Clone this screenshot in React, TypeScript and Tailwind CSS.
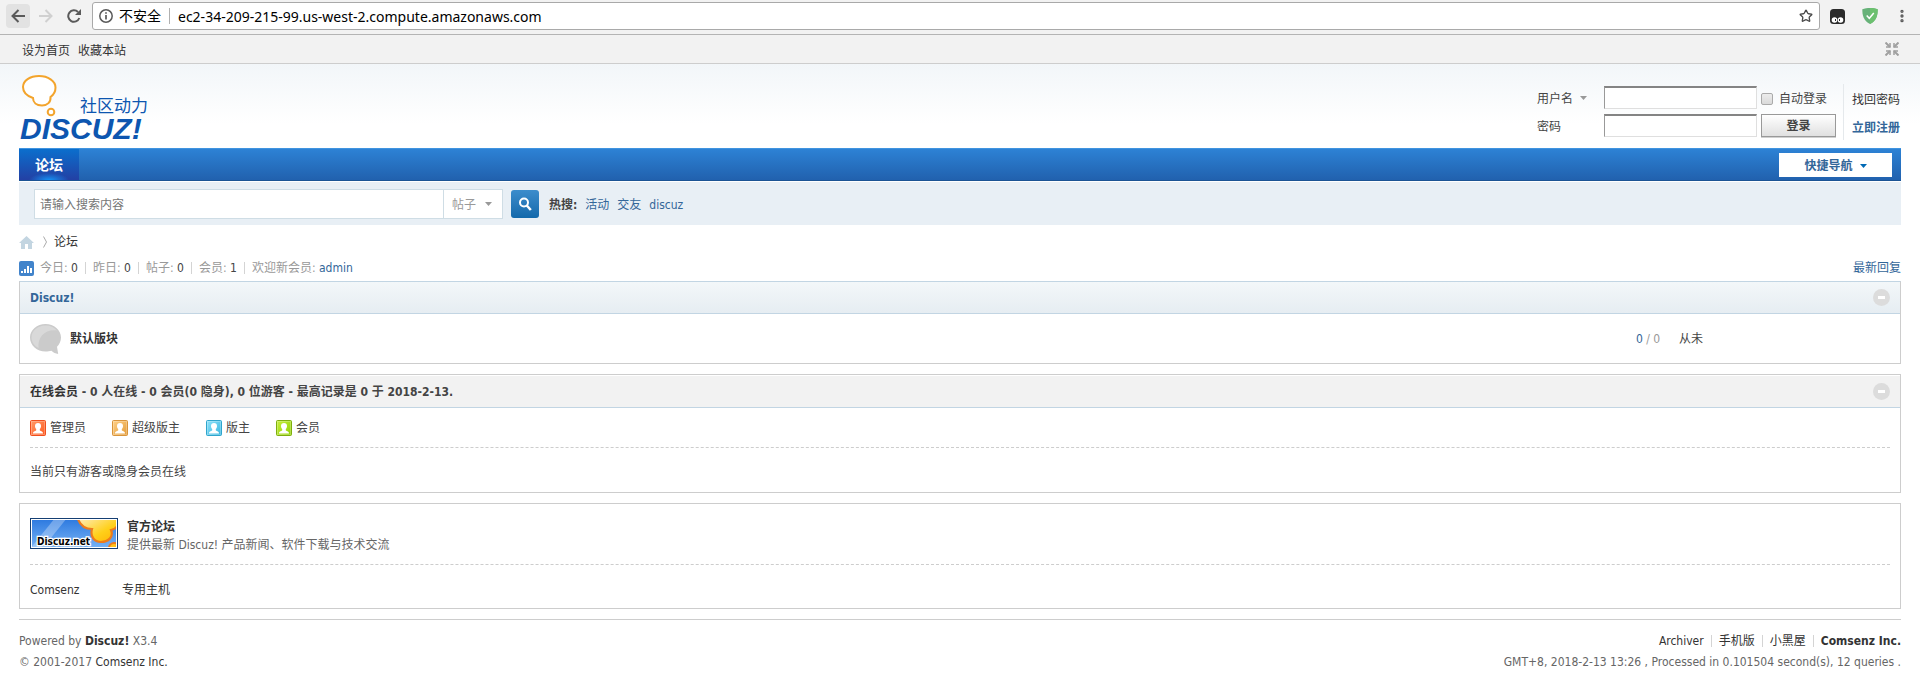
import type { ReactNode } from 'react';
import { MoreVertical, Star } from 'lucide-react';

const hotWords = ['活动', '交友', 'discuz'];

const stats = [
  { label: '今日', value: 0 },
  { label: '昨日', value: 0 },
  { label: '帖子', value: 0 },
  { label: '会员', value: 1 },
];

const groups = [
  { name: '管理员', edge: '#f04e1d', from: '#ff9a68', to: '#ff5a1f' },
  { name: '超级版主', edge: '#d9943a', from: '#ffd28a', to: '#e39a35' },
  { name: '版主', edge: '#2fa5cc', from: '#8fe3fb', to: '#35b4de' },
  { name: '会员', edge: '#7fae0e', from: '#c8f03c', to: '#8fd000' },
];

const Caret = ({ className = '' }: { className?: string }) => (
  <svg viewBox="0 0 7 4" className={`h-1 w-[7px] fill-current ${className}`} aria-hidden="true">
    <path d="M0 0h7L3.5 4z" />
  </svg>
);

const Pipe = () => <span className="mx-[7px] inline-block h-3 w-px bg-[#d4d4d4] align-[-2px]" />;

const ToggleIcon = ({ label }: { label: string }) => (
  <button type="button" aria-label={label} className="flex size-[17px] items-center justify-center rounded-full bg-[#dcdcdc]">
    <span className="h-[3px] w-[7px] bg-white" />
  </button>
);

const Panel = ({ children, className = '' }: { children: ReactNode; className?: string }) => (
  <section className={`border border-[#cdcdcd] bg-white ${className}`}>{children}</section>
);

const UserIcon = ({ id, edge, from, to }: { id: string; edge: string; from: string; to: string }) => (
  <svg viewBox="0 0 16 16" className="size-4" aria-hidden="true">
    <defs>
      <linearGradient id={id} x1="0" y1="0" x2="1" y2="1">
        <stop offset="0" stopColor={from} />
        <stop offset="1" stopColor={to} />
      </linearGradient>
    </defs>
    <rect x="0.5" y="0.5" width="15" height="15" rx="1" fill={`url(#${id})`} stroke={edge} />
    <rect x="1.5" y="1.5" width="13" height="13" fill="none" stroke="#fff" strokeOpacity="0.25" />
    <path d="M8 3c2 0 3 1.200 3 3 0 1.300-.5 2.300-1.200 3v1.200c0 .8 3.200.8 3.200 2.800v.500H3V13c0-2 3.200-2 3.200-2.800V9C5.500 8.300 5 7.300 5 6c0-1.800 1-3 3-3z" fill="#fff" />
  </svg>
);

const BrowserBar = () => (
  <div className="flex h-[35px] items-start border-b border-[#b4b4b4] bg-[#f2f2f2] pl-[6px] pr-[10px] font-['Noto_Sans','Noto_Sans_CJK_SC',sans-serif] text-[14px] text-black">
    <button type="button" aria-label="后退" className="mt-1 flex size-6 items-center justify-center rounded-sm bg-[#e2e2e2]">
      <svg viewBox="0 0 14 14" className="size-[14px]" fill="none" stroke="#5a5a5a" strokeWidth="2">
        <path d="M14 7H1.500M7.500 1 1.500 7l6 6" />
      </svg>
    </button>
    <button type="button" aria-label="前进" className="ml-1 mt-1 flex size-6 items-center justify-center">
      <svg viewBox="0 0 14 14" className="size-[14px]" fill="none" stroke="#d0d0d0" strokeWidth="2">
        <path d="M0 7h12.500M6.500 1l6 6-6 6" />
      </svg>
    </button>
    <button type="button" aria-label="刷新" className="ml-1 mt-1 flex size-6 items-center justify-center">
      <svg viewBox="0 0 14 14" className="size-[14px]" fill="none" stroke="#5a5a5a" strokeWidth="2">
        <path d="M12.300 9A5.700 5.700 0 1 1 11 3" />
        <path d="M14 0v6H8z" fill="#5a5a5a" stroke="none" />
      </svg>
    </button>
    <div className="ml-[6px] mt-[2px] flex h-7 flex-1 items-center rounded-[3px] border border-[#a9a9a9] bg-white pl-[6px] pr-[6px]">
      <svg viewBox="0 0 14 14" className="size-[14px]" fill="none" stroke="#5a5a5a">
        <circle cx="7" cy="7" r="6.200" strokeWidth="1.500" />
        <path d="M7 6v4.500M7 3.300v1.500" strokeWidth="1.700" />
      </svg>
      <span className="ml-[6px] whitespace-nowrap">不安全</span>
      <span className="ml-2 h-4 w-px bg-[#b0b0b0]" />
      <input
        aria-label="地址"
        className="ml-2 h-6 flex-1 bg-transparent outline-none"
        defaultValue="ec2-34-209-215-99.us-west-2.compute.amazonaws.com"
      />
      <button type="button" aria-label="收藏">
        <Star className="size-[14px] text-[#4a4a4a]" strokeWidth={2.3} />
      </button>
    </div>
    <svg viewBox="0 0 15 15" className="ml-[10px] mt-[9px] size-[15px]" aria-hidden="true">
      <rect width="15" height="15" rx="3.500" fill="#2b2b2b" />
      <circle cx="4.500" cy="11" r="2.800" fill="#fff" />
      <circle cx="10.500" cy="11" r="2.800" fill="#fff" />
      <path d="M5 10h1v2H5zM9 10h1v2H9z" fill="#2b2b2b" />
    </svg>
    <svg viewBox="0 0 16 16" className="ml-[17px] mt-2 size-4" aria-hidden="true">
      <path d="M8 0c2.500 0 5.500.5 7.700 1.300 0 6-1.200 11.500-7.700 14.700C1.500 12.800.3 7.300.3 1.300 2.500.5 5.500 0 8 0z" fill="#67b279" />
      <path d="M8 0c2.500 0 5.500.5 7.700 1.300 0 6-1.200 11.500-7.700 14.700z" fill="#6cc06f" />
      <path d="m4.700 7.600 2.600 2.700 4.500-5.200" fill="none" stroke="#fff" strokeWidth="1.500" />
    </svg>
    <button type="button" aria-label="菜单" className="ml-4 mt-2">
      <MoreVertical className="size-4 text-[#5a5a5a]" strokeWidth={3} />
    </button>
  </div>
);

const TopLinks = () => (
  <div className="flex h-[29px] items-center justify-between border-b border-[#cdcdcd] bg-[#f2f2f2] pl-[22px] pr-[21px] text-[#333]">
    <div className="flex gap-2 pt-[3px]">
      <a href="#home">设为首页</a>
      <a href="#fav">收藏本站</a>
    </div>
    <button type="button" aria-label="切换到窄版" className="pb-px">
      <svg viewBox="0 0 14 14" className="block size-[14px]" fill="none" stroke="#a0a0a0" strokeWidth="2">
        <path d="M.5.5 5 5M13.500.5 9 5M.5 13.500 5 9M13.500 13.500 9 9" />
        <path d="M5 1v4H1M9 1v4h4M5 13V9H1M9 13V9h4" strokeWidth="1.500" />
      </svg>
    </button>
  </div>
);

const Logo = () => (
  <a href="#index" aria-label="Discuz!">
    <svg viewBox="0 0 132 74" className="h-[74px] w-[132px]">
      <path
        d="M14 24C6.500 21.500 4 17 4 13 4 6.500 11 2 20 2s16.500 5 16.500 11.500c0 4-2 7.500-5 9.500.5 5-3 8.500-8.500 8.500s-9-3-9-7.500z"
        fill="#fff"
        stroke="#f3a42c"
        strokeWidth="2"
      />
      <circle cx="32" cy="38" r="3.300" fill="#fff" stroke="#f3a42c" strokeWidth="2" />
      <text x="61" y="38" fontSize="17" fill="#0d56b0" fontFamily="Noto Sans CJK SC, sans-serif">社区动力</text>
      <text x="1" y="65" fontSize="30" fontWeight="700" fontStyle="italic" fill="#0d56b0" fontFamily="Liberation Sans, sans-serif">DISCUZ!</text>
    </svg>
  </a>
);

const inputStyle = 'h-[23px] w-[153px] border border-[#dfdfdf] border-l-[#999] border-t-2 border-t-[#848484] bg-white px-1 outline-none';

const LoginForm = () => (
  <form className="flex h-14 pr-px text-[#444]">
    <div className="flex flex-col gap-[5px] pt-[2px]">
      <div className="flex items-center">
        <div className="flex w-[67px] items-center">
          <select aria-label="登录方式" className="w-[43px] appearance-none bg-transparent pt-[2px] outline-none">
            <option>用户名</option>
            <option>Email</option>
          </select>
          <Caret className="text-[#999]" />
        </div>
        <input aria-label="用户名" className={inputStyle} />
        <label className="ml-1 flex w-[75px] items-center gap-[6px] pt-[2px]">
          <input type="checkbox" className="size-3 appearance-none rounded-[2px] border border-[#aaa] bg-linear-to-b from-[#ececec] to-[#dadada]" />
          自动登录
        </label>
      </div>
      <div className="flex items-center">
        <label htmlFor="password" className="w-[67px] pt-[2px]">密码</label>
        <input id="password" type="password" className={inputStyle} />
        <button type="button" className="ml-1 h-[23px] w-[75px] border border-[#999] bg-linear-to-b from-white to-[#e0e0e0] font-bold shadow-[0_1px_0_#d0d0d0]">
          登录
        </button>
      </div>
    </div>
    <div className="ml-[7px] flex flex-col gap-[10px] border-l border-[#e5e9ec] pl-2 pt-[7px]">
      <a href="#lost" className="text-[#333]">找回密码</a>
      <a href="#register" className="font-bold text-[#369]">立即注册</a>
    </div>
  </form>
);

const NavBar = () => (
  <nav className="flex h-[33px] items-stretch justify-between border-b border-[#1b5494] border-t border-t-[#3f94e0] bg-linear-to-b from-[#2d82d5] to-[#2161ae]">
    <a
      href="#forum"
      className="flex w-[60px] items-center justify-center bg-[radial-gradient(ellipse_20px_7px_at_50%_100%,#1492f5,transparent),linear-gradient(#0b6fcd,#2340a4)] text-[14px] font-bold text-white"
    >
      论坛
    </a>
    <button type="button" className="mr-[9px] mt-1 flex h-6 w-[113px] items-center justify-center gap-[7px] bg-white pt-px font-bold text-[#369]">
      快捷导航
      <Caret className="text-[#0069b5]" />
    </button>
  </nav>
);

const SearchBar = () => (
  <form className="mt-px flex h-[43px] items-center bg-[#e8eff5] pl-[15px]">
    <div className="flex h-[30px] items-center border border-[#cfdde5] bg-white">
      <input aria-label="搜索" placeholder="请输入搜索内容" className="h-7 w-[408px] px-[5px] pt-[2px] outline-none placeholder:text-[#757575]" />
      <div className="flex h-7 w-[59px] items-center border-l border-[#cfdde5] pl-2 text-[#999]">
        <select aria-label="搜索类型" className="w-[33px] appearance-none bg-transparent pt-[2px] outline-none">
          <option>帖子</option>
          <option>用户</option>
        </select>
        <Caret />
      </div>
    </div>
    <button type="button" aria-label="搜索" className="ml-2 flex size-7 items-center justify-center rounded-[3px] bg-linear-to-b from-[#3c8dcc] to-[#1269ab]">
      <svg viewBox="0 0 14 14" className="size-[14px]" fill="none" stroke="#fff" strokeWidth="2">
        <circle cx="6" cy="5.500" r="4" />
        <path d="m8.800 8.500 4 4.500" strokeWidth="2.500" />
      </svg>
    </button>
    <div className="ml-[10px] flex gap-2 pt-[2px]">
      <strong className="text-[#444]">热搜:</strong>
      {hotWords.map(word => (
        <a key={word} href="#search" className="text-[#369]">{word}</a>
      ))}
    </div>
  </form>
);

const Breadcrumb = () => (
  <div className="flex h-[34px] items-center text-[#333]">
    <a href="#index" aria-label="首页">
      <svg viewBox="0 0 15 13" className="h-[13px] w-[15px] fill-[#c3d5e1]">
        <path d="M7.500 0 15 7h-2v6H9V8H6v5H2V7H0z" />
      </svg>
    </a>
    <svg viewBox="0 0 4 12" className="ml-[9px] mr-[7px] h-3 w-1" fill="none" stroke="#aaa">
      <path d="M.5.5 3.500 6l-3 5.500" />
    </svg>
    <a href="#forum">论坛</a>
  </div>
);

const StatsLine = () => (
  <div className="mb-1 flex h-[18px] items-center justify-between text-[#999]">
    <div className="flex items-center">
      <svg viewBox="0 0 15 15" className="mr-[6px] size-[15px]" aria-hidden="true">
        <rect width="15" height="15" rx="2" fill="#4284cb" />
        <path d="M2 10h2v2H2zM5 8h2v4H5zM8 5h2v7H8zM11 7h2v5h-2z" fill="#fff" />
      </svg>
      <p>
        {stats.map(stat => (
          <span key={stat.label}>
            {stat.label}: <em className="not-italic text-[#444]">{stat.value}</em>
            <Pipe />
          </span>
        ))}
        欢迎新会员: <a href="#admin" className="text-[#369]">admin</a>
      </p>
    </div>
    <a href="#new" className="text-[#369]">最新回复</a>
  </div>
);

const ForumPanel = () => (
  <Panel className="border-t-[#c2d5e3]">
    <header className="flex h-8 items-center justify-between border-b border-[#c2d5e3] bg-linear-to-b from-[#f3f7f9] to-[#e6edf2] px-[10px]">
      <h2 className="font-bold text-[#369]"><a href="#discuz">Discuz!</a></h2>
      <ToggleIcon label="收起版块" />
    </header>
    <table className="w-full">
      <tbody>
        <tr className="h-[49px]">
          <td className="w-[50px] pl-[10px]">
            <svg viewBox="0 0 32 32" className="size-8" aria-hidden="true">
              <path d="M15.500 1C24 1 31 7 31 14.500c0 4-1.800 7-4 9.300l1.200 7.200c-2.500-.3-5-1.500-6.700-3.200-2 .5-3.700.7-6 .7C7 28.500 0 22.500 0 14.500 0 7 7 1 15.500 1z" fill="#cbcbcb" />
              <path d="M15.500 2.500c5 0 9 2 11.500 5C15 6 7.500 14 8.500 25 4 22.500 1.500 18.800 1.500 14.500c0-6.600 6.300-12 14-12z" fill="#d9d9d9" />
            </svg>
          </td>
          <td><a href="#forum2" className="font-bold text-[#333]">默认版块</a></td>
          <td className="w-[43px] text-[#999]"><span className="text-[#369]">0</span> / 0</td>
          <td className="w-[221px] text-[#444]">从未</td>
        </tr>
      </tbody>
    </table>
  </Panel>
);

const OnlinePanel = () => (
  <Panel className="mt-[10px]">
    <header className="flex h-[33px] items-center justify-between border-b border-t border-b-[#c2d5e3] border-t-white bg-[#f2f2f2] px-[10px]">
      <h3 className="font-bold text-[#444]">
        <a href="#online" className="text-[#333]">在线会员</a> - 0 人在线 - 0 会员(0 隐身), 0 位游客 - 最高记录是 0 于 2018-2-13.
      </h3>
      <ToggleIcon label="收起在线会员" />
    </header>
    <div className="px-[10px] text-[#444]">
      <ul className="flex h-10 items-center gap-[26px] border-b border-dashed border-[#cdcdcd] pt-px">
        {groups.map((group, index) => (
          <li key={group.name} className="flex items-center gap-1">
            <UserIcon id={`group-${index}`} edge={group.edge} from={group.from} to={group.to} />
            {group.name}
          </li>
        ))}
      </ul>
      <p className="flex h-11 items-center pt-[3px]">当前只有游客或隐身会员在线</p>
    </div>
  </Panel>
);

const Banner = () => (
  <svg viewBox="0 0 88 31" className="h-[31px] w-[88px]" role="img" aria-label="Discuz.net">
    <defs>
      <linearGradient id="sky" x1="0" y1="0" x2="0" y2="1">
        <stop offset="0" stopColor="#2f7be0" />
        <stop offset="1" stopColor="#74b0f4" />
      </linearGradient>
      <linearGradient id="cloud" x1="0" y1="0" x2="1" y2="1">
        <stop offset="0" stopColor="#fff0cf" />
        <stop offset="0.6" stopColor="#ffd01a" />
        <stop offset="1" stopColor="#ffb000" />
      </linearGradient>
      <clipPath id="frame"><rect x="2" y="2" width="84" height="27" /></clipPath>
    </defs>
    <rect width="88" height="31" fill="#153f73" />
    <rect x="1" y="1" width="86" height="29" fill="#fff" />
    <g clipPath="url(#frame)">
      <rect x="2" y="2" width="84" height="27" fill="url(#sky)" />
      <path d="M25 0h12L12 31H0z" fill="#fff" fillOpacity="0.3" />
      <path d="M47-2c2 8 7 13 15 13-2 7 2 13 9 13 7 0 13-5 10-12 5-1 8-4 9-14z" fill="url(#cloud)" stroke="#ee7b1b" strokeWidth="2.200" />
      <circle cx="84" cy="30" r="5" fill="#ffc21a" stroke="#ee7b1b" strokeWidth="2" />
      <text x="7" y="27" fontSize="10" fontWeight="700" fontFamily="DejaVu Sans Condensed, DejaVu Sans, sans-serif" stroke="#fff" strokeWidth="2.500" paintOrder="stroke" fill="#000">Discuz.net</text>
    </g>
  </svg>
);

const LinksPanel = () => (
  <Panel className="mt-[10px] px-[10px]">
    <div className="flex h-[61px] items-start gap-[9px] border-b border-dashed border-[#cdcdcd] pt-[14px]">
      <Banner />
      <div className="leading-[18px]">
        <a href="#official" className="block font-bold text-[#333]">官方论坛</a>
        <p className="text-[#666]">提供最新 Discuz! 产品新闻、软件下载与技术交流</p>
      </div>
    </div>
    <ul className="flex h-[43px] items-center pt-[6px] text-[#333]">
      <li className="w-[92px]"><a href="#comsenz">Comsenz</a></li>
      <li><a href="#host">专用主机</a></li>
    </ul>
  </Panel>
);

const Footer = () => (
  <footer className="mt-[10px] flex justify-between border-t border-[#cdcdcd] pt-[11px] leading-[21px] text-[#666]">
    <div>
      <p>Powered by <a href="#discuz" className="font-bold text-[#333]">Discuz!</a> X3.4</p>
      <p>© 2001-2017 <a href="#comsenz" className="text-[#333]">Comsenz Inc.</a></p>
    </div>
    <div className="text-right">
      <p className="text-[#333]">
        <a href="#archiver">Archiver</a>
        <Pipe />
        <a href="#mobile">手机版</a>
        <Pipe />
        <a href="#darkroom">小黑屋</a>
        <Pipe />
        <a href="#comsenz" className="font-bold">Comsenz Inc.</a>
      </p>
      <p>GMT+8, 2018-2-13 13:26 , Processed in 0.101504 second(s), 12 queries .</p>
    </div>
  </footer>
);

const App = () => (
  <div className="min-h-screen bg-white font-['DejaVu_Sans_Condensed','Noto_Sans_CJK_SC',sans-serif] text-[12px] leading-[18px]">
    <BrowserBar />
    <TopLinks />
    <div className="bg-[linear-gradient(#f2f6f9,#fff_60px)] px-[19px]">
      <div className="flex h-[84px] items-start justify-between pt-[10px]">
        <Logo />
        <div className="pt-[10px]">
          <LoginForm />
        </div>
      </div>
      <NavBar />
      <SearchBar />
      <Breadcrumb />
      <StatsLine />
      <ForumPanel />
      <OnlinePanel />
      <LinksPanel />
      <Footer />
    </div>
  </div>
);

export default App;
